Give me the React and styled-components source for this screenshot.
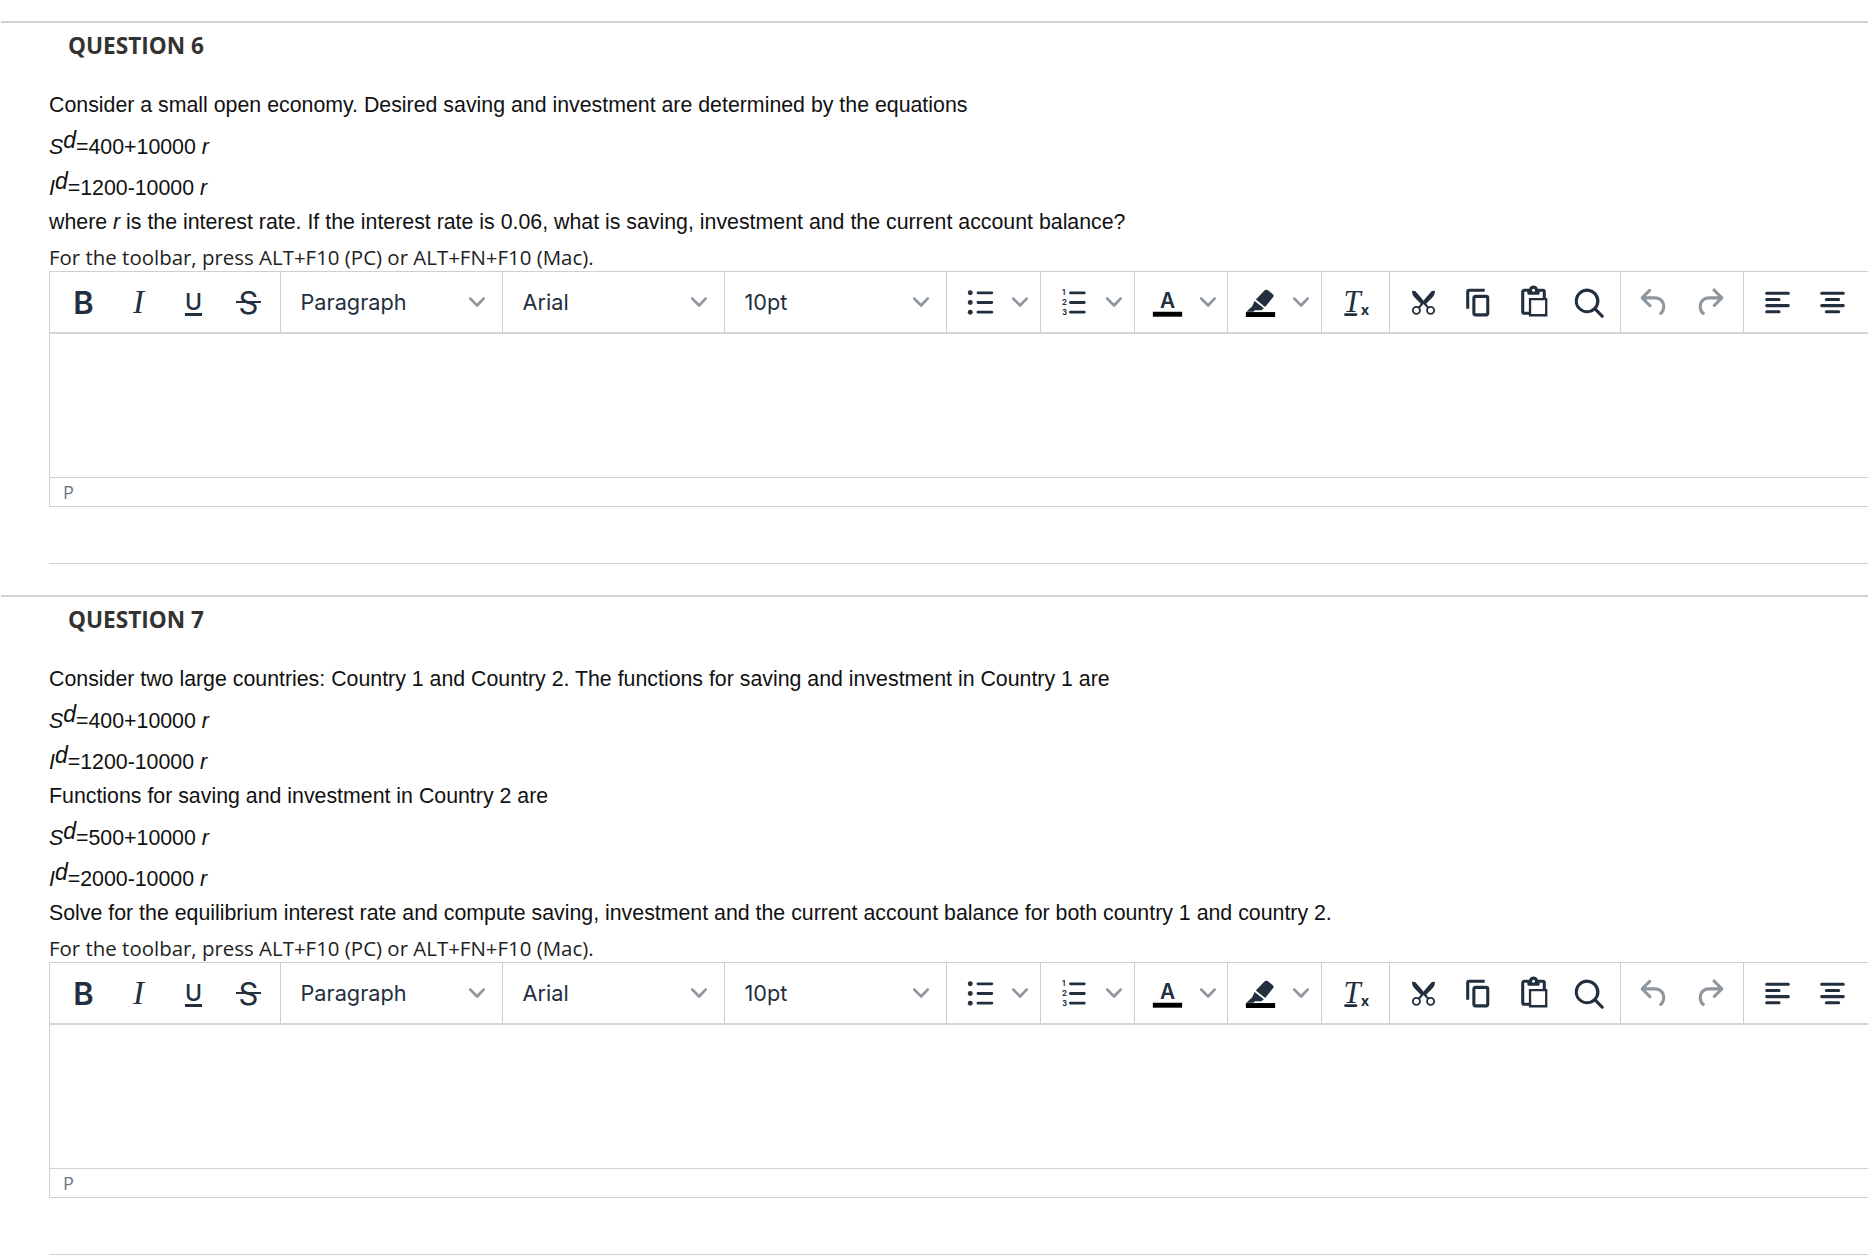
import React from 'react';
import styled, { createGlobalStyle } from 'styled-components';

const GlobalStyle = createGlobalStyle`
  html, body {
    margin: 0;
    background: #fff;
    overflow: hidden;
  }
`;

const Icon = ({ children, size = 37 }) => (
  <IconSvg width={size} height={size} viewBox="0 0 24 24" fill="#222f3e">{children}</IconSvg>
);

const Chevron = () => (
  <ChevronSvg width="16" height="16" viewBox="0 0 10 10" fill="#8f969e">
    <path d="M8.7 2.2c.3-.3.8-.3 1 0 .4.4.4.9 0 1.2L5.7 7.8c-.3.3-.9.3-1.2 0L.2 3.4a.8.8 0 0 1 0-1.2c.3-.3.8-.3 1.1 0L5 6l3.7-3.8z" />
  </ChevronSvg>
);

const BulletIcon = () => (
  <Icon>
    <circle cx="6" cy="5.7" r="1.6" /><circle cx="6" cy="12" r="1.6" /><circle cx="6" cy="18.3" r="1.6" />
    <path d="M11 4.8h9a.9.9 0 0 1 0 1.8h-9a.9.9 0 0 1 0-1.8zm0 6.3h9a.9.9 0 0 1 0 1.8h-9a.9.9 0 0 1 0-1.8zm0 6.3h9a.9.9 0 0 1 0 1.8h-9a.9.9 0 0 1 0-1.8z" />
  </Icon>
);

const NumberIcon = () => (
  <Icon>
    <SmallDigit x="4.6" y="7.4">1</SmallDigit>
    <SmallDigit x="4.6" y="13.8">2</SmallDigit>
    <SmallDigit x="4.6" y="20.2">3</SmallDigit>
    <path d="M10 4.8h9a.9.9 0 0 1 0 1.8h-9a.9.9 0 0 1 0-1.8zm0 6.3h9a.9.9 0 0 1 0 1.8h-9a.9.9 0 0 1 0-1.8zm0 6.3h9a.9.9 0 0 1 0 1.8h-9a.9.9 0 0 1 0-1.8z" />
  </Icon>
);

const TextColorIcon = () => (
  <Icon>
    <LetterA x="12" y="15.3" textAnchor="middle">A</LetterA>
    <rect x="2.5" y="18" width="19" height="3.2" fill="#000" />
  </Icon>
);

const HighlightIcon = () => (
  <Icon>
    <path d="M16.6 3.9l3.4 2.7c.6.5.7 1.3.2 1.9l-5.2 6.4-6-4.8 5.7-6c.5-.5 1.3-.6 1.9-.2zM8.2 11l6 4.8-1.6 1.2H8.4l-1 1H2.8l3.7-3.4z" />
    <rect x="2.5" y="18.2" width="19" height="3.2" fill="#000" />
  </Icon>
);

const RemoveFormatIcon = () => (
  <Icon>
    <LetterT x="9.8" y="18.4" textAnchor="middle">T</LetterT>
    <rect x="4.6" y="18.9" width="8.6" height="1.8" rx=".9" />
    <LetterX x="15.4" y="20.4">x</LetterX>
  </Icon>
);

const CutIcon = () => (
  <Icon>
    <g fill="none" stroke="#222f3e" strokeWidth="1.2">
      <circle cx="7.4" cy="17.1" r="2.3" />
      <circle cx="16.6" cy="17.1" r="2.3" />
    </g>
    <path d="M4.6 4.3l2 .3 3.6 4 1.8 2.3 1.8-2.3 3.6-4 2-.3c.2 2-.7 3.4-2 4.8l-3.6 3.7 1.8 2.3-.9.9-2.7-3.1-2.7 3.1-.9-.9 1.8-2.3-3.6-3.7c-1.3-1.4-2.2-2.8-2-4.8z" />
  </Icon>
);

const CopyIcon = () => (
  <Icon><path d="M16 3H6a2 2 0 0 0-2 2v11h2V5h10V3zm1 4a2 2 0 0 1 2 2v10a2 2 0 0 1-2 2h-7a2 2 0 0 1-2-2V9c0-1.1.9-2 2-2h7zm0 12V9h-7v10h7z" /></Icon>
);

const PasteIcon = () => (
  <Icon><path d="M18 9V5h-2v1c0 .6-.4 1-1 1H9a1 1 0 0 1-1-1V5H6v13h3V9h9zM9 20H6a2 2 0 0 1-2-2V5c0-1.1.9-2 2-2h3.2A3 3 0 0 1 12 1a3 3 0 0 1 2.8 2H18a2 2 0 0 1 2 2v4h1v12H9v-1zm1.5-9.5v9h9v-9h-9zM12 3a1 1 0 0 0-1 1c0 .5.4 1 1 1s1-.5 1-1-.4-1-1-1z" /></Icon>
);

const SearchIcon = () => (
  <Icon><path d="M16 17.3a8 8 0 1 1 1.4-1.4l4.3 4.4a1 1 0 0 1-1.4 1.4l-4.3-4.4zm-5-.3a6 6 0 1 0 0-12 6 6 0 0 0 0 12z" /></Icon>
);

const UndoIcon = () => (
  <MutedIcon width="37" height="37" viewBox="0 0 24 24">
    <path d="M6.4 8H12c3.7 0 6.2 2 6.8 5.1.6 2.7-.4 5.6-2.3 6.8a1 1 0 0 1-1-1.8c1.1-.6 1.8-2.7 1.4-4.6-.5-2.1-2.1-3.5-4.9-3.5H6.4l3.3 3.3a1 1 0 1 1-1.4 1.4l-5-5a1 1 0 0 1 0-1.4l5-5a1 1 0 0 1 1.4 1.4L6.4 8z" />
  </MutedIcon>
);

const RedoIcon = () => (
  <MutedIcon width="37" height="37" viewBox="0 0 24 24">
    <path d="M17.6 10H12c-2.8 0-4.4 1.4-4.9 3.5-.4 2 .3 4 1.4 4.6a1 1 0 1 1-1 1.8c-2-1.2-2.9-4.1-2.3-6.8.6-3 3-5.1 6.8-5.1h5.6l-3.3-3.3a1 1 0 1 1 1.4-1.4l5 5a1 1 0 0 1 0 1.4l-5 5a1 1 0 0 1-1.4-1.4l3.3-3.3z" />
  </MutedIcon>
);

const AlignLeftIcon = () => (
  <Icon><path d="M5 5h14a1 1 0 0 1 0 2H5a1 1 0 1 1 0-2zm0 4h8a1 1 0 0 1 0 2H5a1 1 0 1 1 0-2zm0 8h8a1 1 0 0 1 0 2H5a1 1 0 0 1 0-2zm0-4h14a1 1 0 0 1 0 2H5a1 1 0 0 1 0-2z" /></Icon>
);

const AlignCenterIcon = () => (
  <Icon><path d="M5 5h14a1 1 0 0 1 0 2H5a1 1 0 1 1 0-2zm3 4h8a1 1 0 0 1 0 2H8a1 1 0 1 1 0-2zm0 8h8a1 1 0 0 1 0 2H8a1 1 0 0 1 0-2zm-3-4h14a1 1 0 0 1 0 2H5a1 1 0 0 1 0-2z" /></Icon>
);

const Formula = ({ letter, rest }) => (
  <FormulaLine>
    <em>{letter}</em><Sup>d</Sup>{rest} <em>r</em>
  </FormulaLine>
);

const Editor = () => (
  <EditorBox>
    <Toolbar>
      <Group $width={231}>
        <Btn><BoldGlyph>B</BoldGlyph></Btn>
        <Btn><ItalicGlyph>I</ItalicGlyph></Btn>
        <Btn><UnderGlyph>U</UnderGlyph></Btn>
        <Btn><StrikeGlyph>S</StrikeGlyph></Btn>
      </Group>
      <Select>Paragraph<Chevron /></Select>
      <Select>Arial<Chevron /></Select>
      <Select>10pt<Chevron /></Select>
      <SplitGroup><BulletIcon /><Chevron /></SplitGroup>
      <SplitGroup><NumberIcon /><Chevron /></SplitGroup>
      <SplitGroup><TextColorIcon /><Chevron /></SplitGroup>
      <SplitGroup><HighlightIcon /><Chevron /></SplitGroup>
      <Group $width={68}><Btn><RemoveFormatIcon /></Btn></Group>
      <Group $width={231}>
        <Btn><CutIcon /></Btn>
        <Btn><CopyIcon /></Btn>
        <Btn><PasteIcon /></Btn>
        <Btn><SearchIcon /></Btn>
      </Group>
      <Group $width={123}>
        <Btn><UndoIcon /></Btn>
        <Btn><RedoIcon /></Btn>
      </Group>
      <Group $width={160}>
        <Btn><AlignLeftIcon /></Btn>
        <Btn><AlignCenterIcon /></Btn>
      </Group>
    </Toolbar>
    <Content />
    <StatusBar>P</StatusBar>
  </EditorBox>
);

export default function App() {
  return (
    <Page>
      <GlobalStyle />
      <Question>
        <Title>QUESTION 6</Title>
        <Body>
          <Line>Consider a small open economy. Desired saving and investment are determined by the equations</Line>
          <Formula letter="S" rest="=400+10000" />
          <Formula letter="I" rest="=1200-10000" />
          <Line>where <em>r</em> is the interest rate. If the interest rate is 0.06, what is saving, investment and the current account balance?</Line>
          <Note>For the toolbar, press ALT+F10 (PC) or ALT+FN+F10 (Mac).</Note>
          <Editor />
          <Rule />
        </Body>
      </Question>
      <Question>
        <Title>QUESTION 7</Title>
        <Body>
          <Line>Consider two large countries: Country 1 and Country 2. The functions for saving and investment in Country 1 are</Line>
          <Formula letter="S" rest="=400+10000" />
          <Formula letter="I" rest="=1200-10000" />
          <Line>Functions for saving and investment in Country 2 are</Line>
          <Formula letter="S" rest="=500+10000" />
          <Formula letter="I" rest="=2000-10000" />
          <Line>Solve for the equilibrium interest rate and compute saving, investment and the current account balance for both country 1 and country 2.</Line>
          <Note>For the toolbar, press ALT+F10 (PC) or ALT+FN+F10 (Mac).</Note>
          <Editor />
          <Rule />
        </Body>
      </Question>
    </Page>
  );
}

const Page = styled.div`
  width: 1868px;
  height: 1256px;
  padding-top: 21px;
  overflow: hidden;
  box-sizing: border-box;
`;

const Question = styled.section`
  margin-left: 1px;
  border-top: 2px solid #d2d2d2;
  padding-bottom: 31px;
`;

const Title = styled.h2`
  margin: 0 0 19px 67px;
  height: 46px;
  font: 700 22.6px/46px "Open Sans", sans-serif;
  color: #333;
`;

const Body = styled.div`
  padding-left: 48px;
`;

const Line = styled.div`
  height: 34px;
  font: 400 21.33px/34px "Liberation Sans", Arial, sans-serif;
  color: #111;
  white-space: nowrap;
`;

const FormulaLine = styled(Line)`
  padding-top: 7.5px;
`;

const Sup = styled.em`
  position: relative;
  top: -6px;
  font-size: 23px;
  line-height: 0;
`;

const Note = styled.div`
  margin-top: 4px;
  height: 28px;
  font: 400 20.45px/28px "Open Sans", sans-serif;
  color: #222;
  white-space: nowrap;
`;

const EditorBox = styled.div`
  width: 1900px;
  border: 1.5px solid #cfcfcf;
  border-right: 0;
`;

const Toolbar = styled.div`
  display: flex;
  height: 60px;
  border-bottom: 2px solid #d6d6d6;
`;

const Group = styled.div`
  flex: none;
  display: flex;
  align-items: center;
  box-sizing: border-box;
  width: ${(p) => p.$width}px;
  padding: 0 6px;
  border-right: 1.5px solid #cfcfcf;
`;

const SplitGroup = styled.div`
  flex: none;
  display: flex;
  align-items: center;
  gap: 14px;
  box-sizing: border-box;
  width: 93.75px;
  padding-left: 14px;
  border-right: 1.5px solid #cfcfcf;
`;

const Select = styled.div`
  flex: none;
  display: flex;
  align-items: center;
  justify-content: space-between;
  box-sizing: border-box;
  width: 222px;
  padding: 0 17px 0 19.5px;
  border-right: 1.5px solid #cfcfcf;
  font: 400 21.7px "Inter", sans-serif;
  color: #222f3e;
`;

const Btn = styled.div`
  flex: none;
  width: 55px;
  display: flex;
  align-items: center;
  justify-content: center;
`;

const IconSvg = styled.svg`
  display: block;
  flex: none;
`;

const ChevronSvg = styled.svg`
  display: block;
  flex: none;
`;

const MutedIcon = styled.svg`
  display: block;
  flex: none;
  fill: #8f969e;
`;

const SmallDigit = styled.text`
  font: 700 5px "Inter", sans-serif;
`;

const LetterA = styled.text`
  font: 600 13.5px "Inter", sans-serif;
`;

const LetterT = styled.text`
  font: italic 400 20px "Liberation Serif", serif;
`;

const LetterX = styled.text`
  font: 700 9.5px "Inter", sans-serif;
`;

const BoldGlyph = styled.span`
  font: 600 31px/1 "Inter", sans-serif;
  color: #222f3e;
`;

const ItalicGlyph = styled.span`
  font: italic 400 33px/1 "Liberation Serif", serif;
  color: #222f3e;
`;

const UnderGlyph = styled.span`
  font: 500 23px/1 "Inter", sans-serif;
  color: #222f3e;
  text-decoration: underline;
  text-decoration-thickness: 3px;
  text-underline-offset: 3px;
`;

const StrikeGlyph = styled.span`
  position: relative;
  font: 400 31px/1 "Inter", sans-serif;
  color: #222f3e;

  &::after {
    content: "";
    position: absolute;
    left: -3px;
    right: -3px;
    top: 14px;
    height: 2.5px;
    background: #222f3e;
  }
`;

const Content = styled.div`
  height: 143px;
  border-bottom: 1.5px solid #d2d2d2;
`;

const StatusBar = styled.div`
  height: 28px;
  padding-left: 13px;
  font: 400 18px/28px "Open Sans", sans-serif;
  color: #6a7686;
`;

const Rule = styled.div`
  width: 1900px;
  margin-top: 56px;
  border-top: 1.5px solid #d2d2d2;
`;
